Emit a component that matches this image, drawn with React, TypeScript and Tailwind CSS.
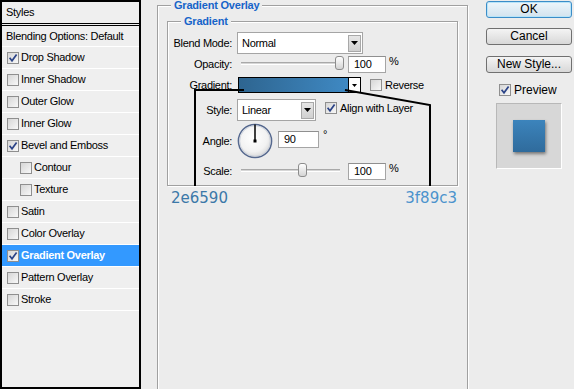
import React from 'react';

const styleItems: { label: string; on?: boolean; indent?: boolean; selected?: boolean }[] = [
  { label: 'Drop Shadow', on: true },
  { label: 'Inner Shadow' },
  { label: 'Outer Glow' },
  { label: 'Inner Glow' },
  { label: 'Bevel and Emboss', on: true },
  { label: 'Contour', indent: true },
  { label: 'Texture', indent: true },
  { label: 'Satin' },
  { label: 'Color Overlay' },
  { label: 'Gradient Overlay', on: true, selected: true },
  { label: 'Pattern Overlay' },
  { label: 'Stroke' },
];

function Check({ on }: { on?: boolean }) {
  return (
    <span className="relative inline-block w-[12px] h-[12px] shrink-0 border border-[#8f8f8f] bg-gradient-to-br from-[#d6d6d6] to-[#f8f8f8]">
      {on && (
        <svg className="absolute left-0 top-0" width="10" height="10" viewBox="0 0 10 10">
          <path d="M1.6 4.8 L4 7.8 L8.6 1.4" fill="none" stroke="#2b4387" strokeWidth="1.7" />
        </svg>
      )}
    </span>
  );
}

function DropButton() {
  return (
    <div className="flex items-center justify-center w-[13px] h-[17px] border border-[#a8a8a8] bg-gradient-to-b from-[#e6e6e6] to-[#d0d0d0]">
      <svg width="7" height="4" viewBox="0 0 7 4">
        <path d="M0 0 H7 L3.5 4 Z" fill="#000" />
      </svg>
    </div>
  );
}

function Slider({ thumb }: { thumb: number }) {
  // thumb = left offset of the slider knob, in px
  return (
    <div className="relative w-[104px] h-full">
      <div className="absolute left-[4px] right-[1px] top-[6px] h-[3px] border-t border-[#a9a9a9] bg-[#d6d6d6] border-b border-b-white" />
      <div
        className="absolute top-0 w-[9px] h-[14px] rounded-[3px] border border-[#8c8c8c] bg-gradient-to-b from-white to-[#d4d4d4]"
        style={{ left: thumb }}
      />
    </div>
  );
}

function NumBox({ value, w }: { value: string; w: number }) {
  return (
    <div
      className="h-[17px] pl-[5px] flex items-center bg-white border border-[#a5a5a5] border-t-[#8f8f8f]"
      style={{ width: w }}
    >
      {value}
    </div>
  );
}

function Label({ children }: { children: React.ReactNode }) {
  return <div className="w-[65px] shrink-0 text-right pr-[1px]">{children}</div>;
}

export default function App() {
  return (
    <div className="relative flex w-[574px] h-[389px] overflow-hidden bg-[#ececec] text-black font-['Liberation_Sans',Arial,sans-serif] text-[11px] tracking-[-0.3px]">
      {/* styles list */}
      <div className="w-[141px] h-full shrink-0 border-2 border-black bg-[#efefef] flex flex-col">
        <div className="h-[20px] pl-[4px] flex items-center">Styles</div>
        <div className="mt-[1px] h-[3px] border-y border-black" />
        <div className="h-[21px] pl-[4px] flex items-center border-b border-white">Blending Options: Default</div>
        {styleItems.map((it) => (
          <div
            key={it.label}
            className={
              'h-[22px] flex items-center gap-[2px] border-b border-white ' +
              (it.indent ? 'pl-[18px] ' : 'pl-[5px] ') +
              (it.selected ? 'bg-[#3399ff] text-white font-bold' : '')
            }
          >
            <Check on={it.on} />
            <span>{it.label}</span>
          </div>
        ))}
      </div>

      {/* gradient overlay settings */}
      <div className="w-[345px] shrink-0 pl-[16px]">
        <fieldset className="w-[311px] h-[400px] px-[9px] border border-[#a0a0a0] shadow-[inset_1px_1px_0_#fff,1px_1px_0_#fff]">
          <legend className="ml-[4px] px-[3px] leading-[11px] font-bold text-[#1764c9] tracking-[-0.2px] bg-[#ececec]">
            Gradient Overlay
          </legend>
          <fieldset className="mt-[4px] w-[291px] pb-[6px] border border-[#a0a0a0] shadow-[inset_1px_1px_0_#fff,1px_1px_0_#fff]">
            <legend className="ml-[13px] px-[3px] leading-[12px] font-bold text-[#1764c9] tracking-[-0.2px] bg-[#ececec]">
              Gradient
            </legend>

            <div className="mt-[5px] h-[22px] flex items-center">
              <Label>Blend Mode:</Label>
              <div className="ml-[4px] w-[126px] h-[22px] flex items-center justify-between bg-white border border-[#a5a5a5] pl-[4px] pr-[1px]">
                <span>Normal</span>
                <DropButton />
              </div>
            </div>

            <div className="mt-[2px] h-[17px] flex items-center">
              <Label>Opacity:</Label>
              <div className="ml-[4px] h-[17px] flex">
                <Slider thumb={98} />
                <div className="ml-[7px]">
                  <NumBox value="100" w={38} />
                </div>
                <span className="ml-[3px] -mt-[3px]">%</span>
              </div>
            </div>

            <div className="mt-[4px] h-[16px] flex items-center">
              <Label>Gradient:</Label>
              <div className="ml-[5px] flex h-[16px]">
                <div className="w-[111px] h-[16px] border border-black bg-gradient-to-r from-[#2e6590] to-[#3f89c3]" />
                <div className="w-[13px] h-[16px] -ml-[1px] flex items-center justify-center bg-white border border-black">
                  <svg width="5" height="3" viewBox="0 0 5 3">
                    <path d="M0 0 H5 L2.5 3 Z" fill="#000" />
                  </svg>
                </div>
              </div>
              <div className="ml-[9px] flex items-center gap-[3px]">
                <Check />
                <span>Reverse</span>
              </div>
            </div>

            <div className="mt-[6px] h-[22px] flex items-center">
              <Label>Style:</Label>
              <div className="ml-[4px] w-[79px] h-[22px] flex items-center justify-between bg-white border border-[#a5a5a5] pl-[4px] pr-[1px]">
                <span>Linear</span>
                <DropButton />
              </div>
              <div className="ml-[9px] -mt-[4px] flex items-center gap-[3px]">
                <Check on />
                <span>Align with Layer</span>
              </div>
            </div>

            <div className="mt-[2px] h-[36px] flex items-center">
              <Label>Angle:</Label>
              <div className="ml-[4px]">
                <svg width="36" height="36" viewBox="0 0 36 36">
                  <defs>
                    <radialGradient id="dial" cx="0.45" cy="0.4" r="0.6">
                      <stop offset="0" stopColor="#ffffff" />
                      <stop offset="0.7" stopColor="#f2f2f2" />
                      <stop offset="1" stopColor="#d8d8d8" />
                    </radialGradient>
                  </defs>
                  <circle cx="18" cy="18" r="16.6" fill="url(#dial)" stroke="#56698f" strokeWidth="1.5" />
                  <circle cx="18" cy="18" r="15.3" fill="none" stroke="#c8ced9" strokeWidth="0.8" />
                  <line x1="18" y1="18" x2="18" y2="1.5" stroke="#000" strokeWidth="1.5" />
                  <rect x="16.5" y="16.5" width="3" height="3" fill="#000" />
                </svg>
              </div>
              <div className="ml-[5px] -mt-[3px]">
                <NumBox value="90" w={41} />
              </div>
              <span className="ml-[4px] -mt-[13px]">°</span>
            </div>

            <div className="mt-[4px] h-[16px] flex items-center">
              <Label>Scale:</Label>
              <div className="ml-[4px] h-[16px] flex">
                <Slider thumb={61} />
                <div className="ml-[7px]">
                  <NumBox value="100" w={38} />
                </div>
                <span className="ml-[3px] -mt-[3px]">%</span>
              </div>
            </div>
          </fieldset>

          <div className="w-[291px] mt-[3px] flex justify-between pl-[4px] pr-[1px] font-['DejaVu_Sans',sans-serif] text-[15px] leading-[18px] tracking-normal">
            <span className="text-[#3b78a8]">2e6590</span>
            <span className="text-[#4b93cc]">3f89c3</span>
          </div>
        </fieldset>
      </div>

      {/* buttons */}
      <div className="w-[86px] shrink-0 flex flex-col text-[12px] tracking-normal">
        <button className="mt-[1px] h-[17px] leading-[15px] rounded-[3px] border border-[#3b8dc8] bg-gradient-to-b from-[#eef6fb] to-[#d3e3ee] shadow-[inset_0_0_0_1px_#b9e4f8]">
          OK
        </button>
        <button className="mt-[10px] h-[17px] leading-[15px] rounded-[3px] border border-[#707070] bg-gradient-to-b from-[#f4f4f4] to-[#d8d8d8]">
          Cancel
        </button>
        <button className="mt-[11px] h-[17px] leading-[15px] rounded-[3px] border border-[#707070] bg-gradient-to-b from-[#f4f4f4] to-[#d8d8d8]">
          New Style...
        </button>
        <div className="mt-[10px] h-[13px] pl-[13px] flex items-center gap-[3px]">
          <Check on />
          <span>Preview</span>
        </div>
        <div className="mt-[7px] ml-[10px] w-[66px] h-[66px] flex items-center justify-center bg-[#d7d7d7] border border-[#b8b8b8] border-r-white border-b-white">
          <div className="w-[32px] h-[32px] bg-gradient-to-b from-[#3c84bc] to-[#2f6b9c] shadow-[1px_2px_3px_rgba(0,0,0,0.45)]" />
        </div>
      </div>

      {/* callout lines over the gradient panel */}
      <svg className="absolute left-0 top-0 pointer-events-none" width="574" height="389" viewBox="0 0 574 389">
        <path d="M244 90 H195 V186" fill="none" stroke="#000" strokeWidth="2" />
        <path d="M345 90 L430 105 V186" fill="none" stroke="#000" strokeWidth="2" />
      </svg>
    </div>
  );
}
